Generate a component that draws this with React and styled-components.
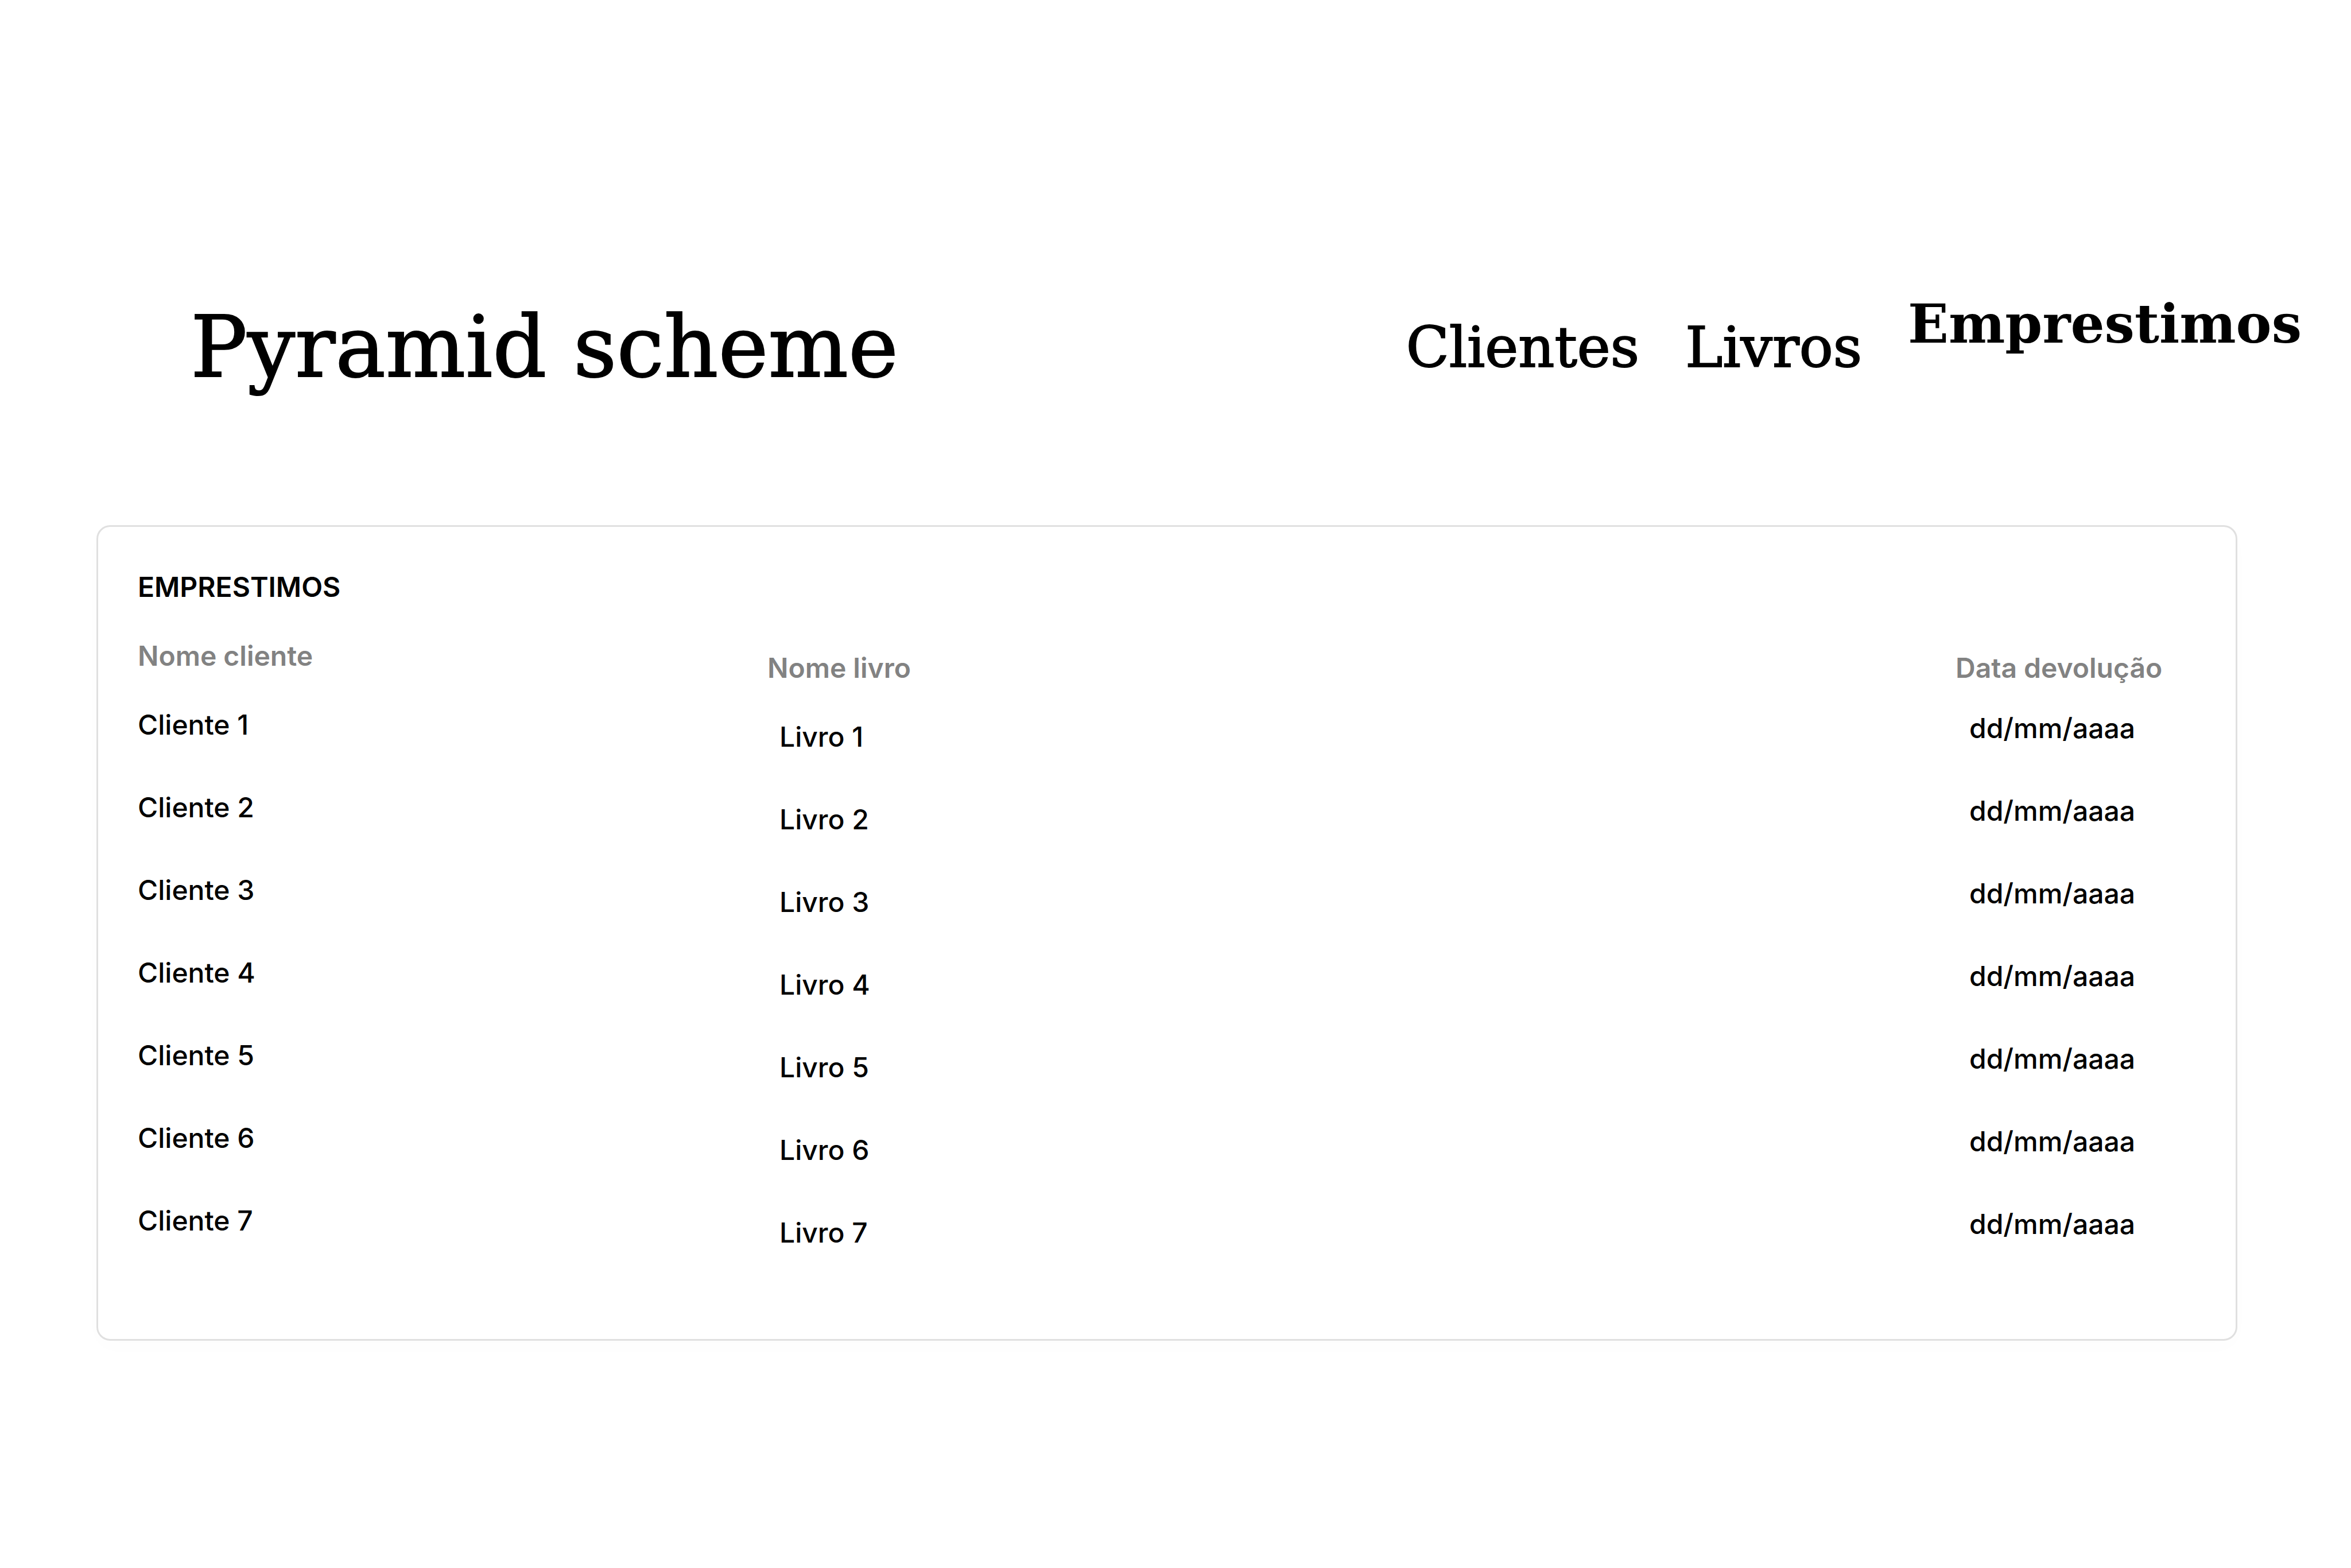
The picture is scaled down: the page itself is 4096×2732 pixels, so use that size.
import React from "react";
import styled, { createGlobalStyle } from "styled-components";

const GlobalStyle = createGlobalStyle`
  *, *::before, *::after { box-sizing: border-box; }
  body {
    margin: 0;
    background: #fff;
    color: #000;
    font-family: Inter, "Liberation Sans", sans-serif;
  }
`;

const Page = styled.div`
  min-height: 100vh;
`;

const Header = styled.header`
  display: flex;
  align-items: flex-start;
  justify-content: space-between;
  padding: 505px 86px 219px 332px;
  font-family: "DejaVu Serif", "Liberation Serif", serif;
`;

const Brand = styled.h1`
  margin: 0;
  padding-top: 11px;
  font-size: 147px;
  line-height: 180px;
  font-weight: 400;
  -webkit-text-stroke: 2px currentColor;
  white-space: nowrap;
`;

const Nav = styled.nav`
  display: flex;
  align-items: flex-end;
  gap: 80px;
`;

const NavLink = styled.a`
  padding-bottom: ${(p) => (p.$active ? "40px" : "0")};
  color: inherit;
  font-size: ${(p) => (p.$active ? "93px" : "98px")};
  font-weight: ${(p) => (p.$active ? 700 : 400)};
  -webkit-text-stroke: ${(p) => (p.$active ? "0" : "2px currentColor")};
  line-height: 120px;
  text-decoration: none;
  white-space: nowrap;
`;

const Main = styled.main`
  padding: 0 198px 0 168px;
`;

const Card = styled.section`
  padding: 69px 69px 98px;
  border: 3px solid #e0e0e0;
  border-radius: 24px;
  background: #fff;
  box-shadow: 0 12px 36px rgba(0, 0, 0, 0.01);
`;

const CardTitle = styled.h2`
  margin: 0 0 48px;
  font-size: 48px;
  line-height: 72px;
  font-weight: 600;
`;

const Table = styled.table`
  width: 100%;
  border-collapse: collapse;
  table-layout: fixed;
  font-size: 48px;
  line-height: 72px;
`;

const Col = styled.col`
  width: ${(p) => p.$width};
`;

const HeadRow = styled.tr`
  height: 120px;
`;

const Row = styled.tr`
  height: 144px;
`;

const HeadCell = styled.th`
  padding: ${(p) => (p.$lowered ? "21px" : "0")} 0 0;
  color: #828282;
  font-weight: 600;
  text-align: left;
  vertical-align: top;
`;

const Cell = styled.td`
  padding: 0;
  font-weight: 500;
  vertical-align: top;
`;

const BookCell = styled(Cell)`
  padding: 21px 0 0 21px;
`;

const DateCell = styled(Cell)`
  padding: 6px 0 0 24px;
`;

const links = [
  { label: "Clientes", href: "#clientes" },
  { label: "Livros", href: "#livros" },
  { label: "Emprestimos", href: "#emprestimos", active: true },
];

const loans = [1, 2, 3, 4, 5, 6, 7].map((n) => ({
  id: n,
  client: `Cliente ${n}`,
  book: `Livro ${n}`,
  due: "dd/mm/aaaa",
}));

export default function App() {
  return (
    <Page>
      <GlobalStyle />
      <Header>
        <Brand>Pyramid scheme</Brand>
        <Nav>
          {links.map((link) => (
            <NavLink
              key={link.href}
              href={link.href}
              $active={link.active}
              aria-current={link.active ? "page" : undefined}
            >
              {link.label}
            </NavLink>
          ))}
        </Nav>
      </Header>
      <Main>
        <Card aria-labelledby="loans-title">
          <CardTitle id="loans-title">EMPRESTIMOS</CardTitle>
          <Table aria-labelledby="loans-title">
            <colgroup>
              <Col $width="1097px" />
              <Col />
              <Col $width="419px" />
            </colgroup>
            <thead>
              <HeadRow>
                <HeadCell scope="col">Nome cliente</HeadCell>
                <HeadCell scope="col" $lowered>Nome livro</HeadCell>
                <HeadCell scope="col" $lowered>Data devolução</HeadCell>
              </HeadRow>
            </thead>
            <tbody>
              {loans.map((loan) => (
                <Row key={loan.id}>
                  <Cell>{loan.client}</Cell>
                  <BookCell>{loan.book}</BookCell>
                  <DateCell>{loan.due}</DateCell>
                </Row>
              ))}
            </tbody>
          </Table>
        </Card>
      </Main>
    </Page>
  );
}
